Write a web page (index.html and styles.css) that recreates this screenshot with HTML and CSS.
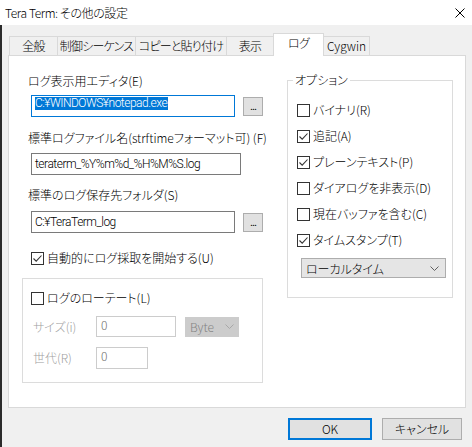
FILE: index.html
```html
<!DOCTYPE html>
<html lang="ja">
<head>
<meta charset="utf-8">
<link rel="stylesheet" href="styles.css">
</head>
<body>
<div class="window">
  <div class="titlebar">
    <span class="title">Tera Term: その他の設定</span>
    <svg class="close" width="10" height="10" viewBox="0 0 10 10"><path d="M0.5 0.5 L9.5 9.5 M9.5 0.5 L0.5 9.5" stroke="#000" stroke-width="1" fill="none"/></svg>
  </div>
  <div class="body">
    <div class="tabs">
      <div class="tab tab-general">全般</div>
      <div class="tab tab-control">制御シーケンス</div>
      <div class="tab tab-copy">コピーと貼り付け</div>
      <div class="tab tab-view">表示</div>
      <div class="tab tab-log active">ログ</div>
      <div class="tab tab-cygwin">Cygwin</div>
    </div>
    <div class="panel">
      <div class="left">
        <div class="label l-editor">ログ表示用エディタ(E)</div>
        <div class="row row-editor">
          <div class="input focused"><span class="selected">C:¥WINDOWS¥notepad.exe</span></div>
          <div class="browse">...</div>
        </div>
        <div class="label l-file">標準ログファイル名(strftimeフォーマット可) (F)</div>
        <div class="row row-file">
          <div class="input">teraterm_%Y%m%d_%H%M%S.log</div>
        </div>
        <div class="label l-folder">標準のログ保存先フォルダ(S)</div>
        <div class="row row-folder">
          <div class="input">C:¥TeraTerm_log</div>
          <div class="browse">...</div>
        </div>
        <div class="check check-auto">
          <span class="box"><svg width="11" height="11" viewBox="0 0 11 11"><path d="M1.5 5.5 L4.2 8.2 L9.5 2.5" stroke="#333" stroke-width="1.1" fill="none"/></svg></span>
          <span>自動的にログ採取を開始する(U)</span>
        </div>
        <div class="rotate">
          <div class="check">
            <span class="box"></span>
            <span>ログのローテート(L)</span>
          </div>
          <div class="drow drow-size">
            <span class="dlabel">サイズ(i)</span>
            <div class="dinput dinput-size">0</div>
            <div class="dselect"><span>Byte</span><svg width="9" height="5" viewBox="0 0 9 5"><path d="M0.5 0.5 L4.5 4.5 L8.5 0.5" stroke="#a8a8a8" fill="none"/></svg></div>
          </div>
          <div class="drow drow-gen">
            <span class="dlabel">世代(R)</span>
            <div class="dinput dinput-gen">0</div>
          </div>
        </div>
      </div>
      <fieldset class="options">
        <legend>オプション</legend>
        <div class="check">
          <span class="box"></span><span>バイナリ(R)</span>
        </div>
        <div class="check">
          <span class="box"><svg width="11" height="11" viewBox="0 0 11 11"><path d="M1.5 5.5 L4.2 8.2 L9.5 2.5" stroke="#333" stroke-width="1.1" fill="none"/></svg></span><span>追記(A)</span>
        </div>
        <div class="check">
          <span class="box"><svg width="11" height="11" viewBox="0 0 11 11"><path d="M1.5 5.5 L4.2 8.2 L9.5 2.5" stroke="#333" stroke-width="1.1" fill="none"/></svg></span><span>プレーンテキスト(P)</span>
        </div>
        <div class="check">
          <span class="box"></span><span>ダイアログを非表示(D)</span>
        </div>
        <div class="check">
          <span class="box"></span><span>現在バッファを含む(C)</span>
        </div>
        <div class="check">
          <span class="box"><svg width="11" height="11" viewBox="0 0 11 11"><path d="M1.5 5.5 L4.2 8.2 L9.5 2.5" stroke="#333" stroke-width="1.1" fill="none"/></svg></span><span>タイムスタンプ(T)</span>
        </div>
        <div class="select"><span>ローカルタイム</span><svg width="9" height="5" viewBox="0 0 9 5"><path d="M0.5 0.5 L4.5 4.5 L8.5 0.5" stroke="#606060" fill="none"/></svg></div>
      </fieldset>
    </div>
    <div class="footer">
      <div class="btn btn-ok">OK</div>
      <div class="btn btn-cancel">キャンセル</div>
    </div>
  </div>
</div>
</body>
</html>
```

FILE: styles.css
```css
* { box-sizing: border-box; }
html, body { margin: 0; padding: 0; }
body {
  width: 472px;
  height: 447px;
  overflow: hidden;
  background: #f0f0f0;
  font-family: "Noto Sans CJK JP", sans-serif;
  font-size: 12px;
  font-weight: 300;
  font-feature-settings: "palt";
  color: #000;
}
.window { width: 472px; height: 447px; }
.titlebar {
  height: 25px;
  background: #fff;
  display: flex;
  align-items: center;
  padding-left: 5px;
}
.title { line-height: 16px; letter-spacing: -0.4px; }
.close { margin-left: auto; margin-right: 7px; }
.body {
  height: 422px;
  border-left: 2px solid #2b2b2b;
  padding: 8px 6px 0 6px;
}
.tabs {
  height: 22px;
  display: flex;
  align-items: flex-end;
  padding-left: 1px;
}
.tab {
  height: 19px;
  border: 1px solid #d9d9d9;
  border-bottom: none;
  background: #f0f0f0;
  text-align: center;
  line-height: 16px;
  padding-top: 1px;
  white-space: nowrap;
  margin-left: -1px;
  letter-spacing: -0.8px;
}
.tab-general { width: 49px; margin-left: 0; }
.tab-control { width: 79px; }
.tab-copy { width: 92px; }
.tab-view { width: 48px; }
.tab-log { width: 51px; }
.tab-cygwin { width: 47px; letter-spacing: 0; }
.tab.active {
  height: 23px;
  background: #fff;
  margin-bottom: -1px;
  position: relative;
  z-index: 1;
  padding-top: 1px;
}
.panel {
  height: 353px;
  border: 1px solid #d9d9d9;
  background: #fff;
  display: flex;
  align-items: flex-start;
  padding-left: 13px;
}
.left { width: 241px; margin-right: 24px; }
.label { line-height: 16px; height: 16px; margin-left: 6px; white-space: nowrap; }
.l-editor { margin-top: 17px; }
.l-file { margin-top: 13px; }
.l-folder { margin-top: 12px; }
.row { display: flex; align-items: center; gap: 8px; margin-left: 9px; }
.row-editor { margin-top: 6px; }
.row-file { margin-top: 7px; }
.row-folder { margin-top: 8px; }
.input {
  width: 210px;
  height: 22px;
  border: 1px solid #7a7a7a;
  background: #fff;
  display: flex;
  align-items: center;
  padding-left: 3px;
  white-space: nowrap;
  line-height: 14px;
  font-family: Roboto, "Noto Sans CJK JP", sans-serif;
  font-weight: 300;
  letter-spacing: -0.5px;
}
.input.focused { border-color: #0078d7; align-items: flex-start; padding-top: 1px; }
.selected { background: #0078d7; color: #fff; padding: 0 1px 0 0; line-height: 13px; }
.browse {
  width: 20px;
  height: 19px;
  border: 1px solid #adadad;
  background: #e1e1e1;
  font-size: 9px;
  line-height: 9px;
  display: flex;
  align-items: flex-end;
  justify-content: center;
  padding-bottom: 4px;
  letter-spacing: -0.5px;
  font-weight: 400;
}
.check {
  display: flex;
  align-items: center;
  gap: 3px;
  height: 16px;
  line-height: 16px;
  white-space: nowrap;
}
.box {
  width: 13px;
  height: 13px;
  border: 1px solid #333;
  background: #fff;
  display: flex;
  align-items: center;
  justify-content: center;
  flex: none;
}
.check-auto { margin-top: 17px; margin-left: 9px; }
.rotate {
  margin-top: 12px;
  height: 105px;
  border: 1px solid #dcdcdc;
  padding: 11px 0 0 8px;
}
.drow { display: flex; align-items: center; margin-top: 10px; }
.dlabel { width: 65px; color: #a0a0a0; padding-left: 2px; line-height: 16px; }
.dinput {
  height: 21px;
  border: 1px solid #cccccc;
  background: #fff;
  color: #6d6d6d;
  padding: 1px 0 0 4px;
  line-height: 14px;
}
.dinput-size { width: 80px; }
.dinput-gen { width: 52px; height: 22px; }
.dselect {
  margin-left: 9px;
  width: 54px;
  height: 20px;
  background: #cccccc;
  border: 1px solid #cccccc;
  color: #838383;
  display: flex;
  align-items: center;
  justify-content: space-between;
  padding: 0 4px 0 4px;
}
.options {
  margin: 16px 0 0 0;
  width: 166px;
  height: 226px;
  border: 1px solid #dcdcdc;
  padding: 14px 0 18px 9px;
  min-width: 0;
}
.options legend {
  padding: 0 2px;
  margin-left: -4px;
  line-height: 16px;
}
.options .check + .check { margin-top: 10px; }
.select {
  margin: 10px 0 0 4px;
  width: 145px;
  height: 20px;
  background: #e5e5e5;
  border: 1px solid #adadad;
  display: flex;
  align-items: center;
  justify-content: space-between;
  padding: 0 6px 0 4px;
}
.footer {
  display: flex;
  justify-content: flex-end;
  gap: 10px;
  margin-top: 10px;
  padding-right: 4px;
}
.btn {
  height: 22px;
  background: #e1e1e1;
  border: 1px solid #adadad;
  display: flex;
  align-items: center;
  justify-content: center;
  line-height: 16px;
}
.btn-ok { width: 84px; border: 2px solid #0078d7; }
.btn-cancel { width: 80px; }
```
